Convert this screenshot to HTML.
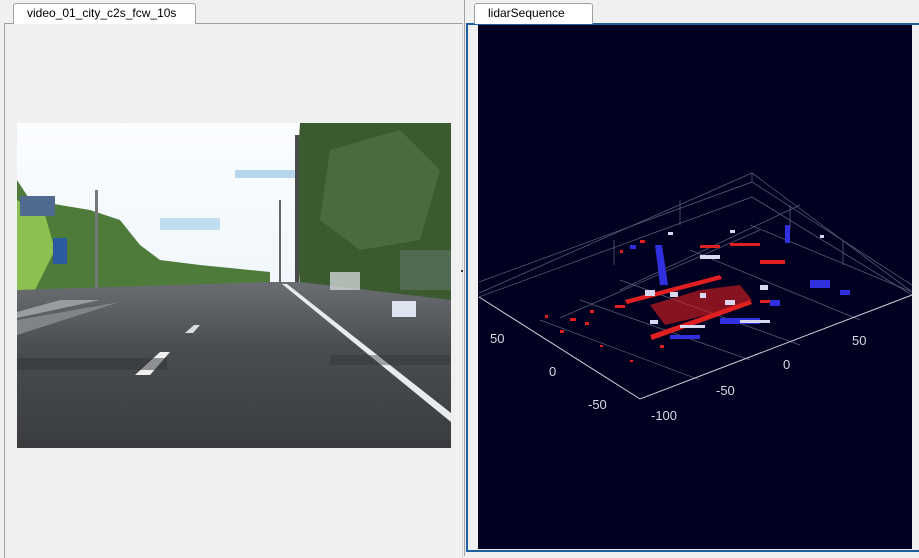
<!DOCTYPE html>
<html><head><meta charset="utf-8"><style>
html,body{margin:0;padding:0;width:919px;height:556px;overflow:hidden;background:#f0f0f0;font-family:"Liberation Sans",sans-serif;}
.abs{position:absolute}
.tab{position:absolute;background:#fff;border:1px solid #a0a0a0;border-bottom:none;border-radius:3px 3px 0 0;font-size:12px;color:#000;line-height:18px;padding-left:13px;box-sizing:border-box}
</style></head><body>
<div class="abs" style="left:0;top:0;width:462px;height:556px;background:#f0f0f0"></div>
<div class="abs" style="left:4px;top:23px;width:457px;height:534px;border-left:1px solid #a0a0a0;border-top:1px solid #a0a0a0;border-right:1px solid #d8d8d8"></div>
<div class="tab" style="left:13px;top:3px;width:183px;height:21px">video_01_city_c2s_fcw_10s</div>
<div class="abs" style="left:464px;top:0;width:1px;height:556px;background:#a0a0a0"></div>
<div class="abs" style="left:461px;top:270px;width:2px;height:2px;background:#333"></div>
<div class="abs" style="left:466px;top:23px;width:453px;height:529px;border:2px solid #1f5f9f;border-right:none;box-sizing:border-box"></div>
<div class="tab" style="left:474px;top:3px;width:119px;height:21px">lidarSequence</div>
<div class="abs" style="left:478px;top:25px;width:434px;height:524px;background:#000020"></div>
<svg class="abs" style="left:0;top:0" width="919" height="556">
<defs>
<linearGradient id="sky" x1="0" y1="0" x2="0" y2="1"><stop offset="0" stop-color="#fbfdff"/><stop offset="1" stop-color="#e6f0f8"/></linearGradient>
<linearGradient id="road" x1="0" y1="0" x2="0" y2="1"><stop offset="0" stop-color="#6a6e72"/><stop offset="0.4" stop-color="#4a4d50"/><stop offset="1" stop-color="#3a3c3e"/></linearGradient>
</defs>
<rect x="17" y="123" width="434" height="325" fill="url(#sky)"/>
<rect x="160" y="218" width="60" height="12" fill="#9cc8e4" opacity=".6"/>
<rect x="235" y="170" width="60" height="8" fill="#8cc0e0" opacity=".6"/>
<path d="M17 180 L30 200 L60 205 L90 210 L120 220 L140 245 L160 260 L200 265 L250 270 L270 272 L270 290 L17 300Z" fill="#4e7a3a"/>
<path d="M17 200 L45 215 L55 250 L35 290 L17 295Z" fill="#8cc050"/>
<path d="M300 123 L451 123 L451 310 L300 290 L295 200Z" fill="#3c5a30"/>
<path d="M330 150 L400 130 L440 170 L420 240 L360 250 L320 220Z" fill="#4d7040" opacity=".8"/>
<rect x="400" y="250" width="51" height="40" fill="#5a7060" opacity=".7"/>
<rect x="295" y="135" width="4" height="150" fill="#4a4a48"/>
<rect x="279" y="200" width="2" height="85" fill="#666"/>
<rect x="95" y="190" width="3" height="100" fill="#777"/>
<rect x="53" y="238" width="14" height="26" fill="#2a5aa0"/>
<rect x="20" y="196" width="35" height="20" fill="#506a90"/>
<path d="M17 290 L270 282 L300 282 L451 300 L451 448 L17 448Z" fill="url(#road)"/>
<path d="M17 335 L120 302 L17 320Z" fill="#808486"/>
<path d="M17 312 L60 300 L100 300 L17 318Z" fill="#9a9c9e"/>
<path d="M282 284 L287 284 L451 413 L451 422Z" fill="#e8ecf0"/>
<path d="M135 375 L150 375 L170 352 L160 352Z" fill="#eee"/>
<path d="M185 333 L193 333 L200 325 L194 325Z" fill="#ddd"/>
<rect x="17" y="358" width="150" height="12" fill="#2f3234" opacity=".5"/>
<rect x="330" y="355" width="120" height="10" fill="#2f3234" opacity=".4"/>
<rect x="392" y="301" width="24" height="16" fill="#dde4f0"/>
<rect x="330" y="272" width="30" height="18" fill="#e0e4ea" opacity=".7"/>
<g stroke="#555c70" stroke-width="0.8" fill="none">
<path d="M479 293 L752 173 L912 292"/>
<path d="M479 282 L752 182 L912 285"/>
<path d="M752 173 L752 182"/>
<path d="M479 297 L752 197 L912 295"/>
<path d="M614 265 L614 240 M680 225 L680 200 M790 230 L790 205 M843 265 L843 240 M620 290 L800 205 M560 318 L760 230"/>
<path d="M540 320 L700 380 M580 300 L750 360 M620 280 L800 345 M690 250 L860 320 M750 225 L912 292"/>
</g>
<g stroke="#d0d0d8" stroke-width="1" fill="none">
<path d="M479 297 L640 399 L912 295"/>
</g>
<g font-family="Liberation Sans,sans-serif" font-size="13" fill="#d8d8e0">
<text x="490" y="343">50</text><text x="549" y="376">0</text><text x="588" y="409">-50</text>
<text x="651" y="420">-100</text><text x="716" y="395">-50</text><text x="783" y="369">0</text><text x="852" y="345">50</text>
</g>
<g fill="#e02020">
<path d="M650 305 L700 290 L740 285 L752 300 L720 312 L665 325Z" opacity=".6"/>
<path d="M650 335 L750 300 L752 304 L652 340Z"/>
<path d="M625 300 L720 275 L722 279 L627 304Z"/>
<rect x="570" y="318" width="6" height="3"/><rect x="590" y="310" width="4" height="3"/><rect x="585" y="322" width="4" height="3"/>
<rect x="615" y="305" width="10" height="3"/><rect x="545" y="315" width="3" height="3"/><rect x="600" y="345" width="3" height="2"/>
<rect x="620" y="250" width="3" height="3"/><rect x="640" y="240" width="5" height="3"/><rect x="700" y="245" width="20" height="3"/>
<rect x="730" y="243" width="30" height="3"/><rect x="760" y="260" width="25" height="4"/><rect x="560" y="330" width="4" height="3"/>
<rect x="760" y="300" width="20" height="3"/><rect x="660" y="345" width="4" height="3"/><rect x="630" y="360" width="3" height="2"/>
</g>
<g fill="#3030e0">
<path d="M655 245 L662 245 L668 285 L660 285Z"/>
<rect x="720" y="318" width="40" height="6"/><rect x="770" y="300" width="10" height="6"/>
<rect x="810" y="280" width="20" height="8"/><rect x="785" y="225" width="5" height="18"/>
<rect x="670" y="335" width="30" height="4"/><rect x="630" y="245" width="6" height="4"/>
<rect x="840" y="290" width="10" height="5"/>
</g>
<g fill="#d8d8f0">
<rect x="700" y="255" width="20" height="4"/><rect x="645" y="290" width="10" height="6"/><rect x="670" y="292" width="8" height="5"/>
<rect x="700" y="293" width="6" height="5"/><rect x="725" y="300" width="10" height="5"/><rect x="650" y="320" width="8" height="4"/>
<rect x="740" y="320" width="30" height="3"/><rect x="680" y="325" width="25" height="3"/><rect x="760" y="285" width="8" height="5"/>
<rect x="820" y="235" width="4" height="3"/><rect x="730" y="230" width="5" height="3"/><rect x="668" y="232" width="5" height="3"/>
</g>
</svg>
</body></html>
